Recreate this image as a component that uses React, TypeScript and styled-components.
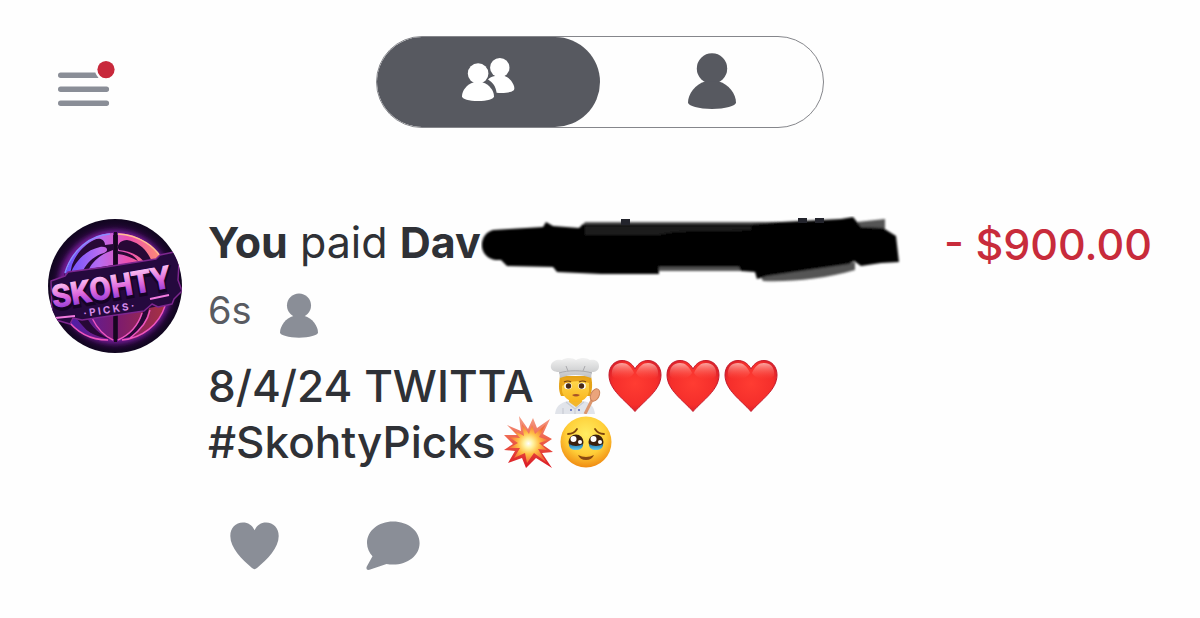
import React from "react";
import styled, { createGlobalStyle } from "styled-components";

const GlobalStyle = createGlobalStyle`
  * { box-sizing: border-box; }
  body {
    margin: 0;
    background: #fefefe;
    color: #2f3136;
    font-family: Inter, "Liberation Sans", sans-serif;
  }
  button {
    margin: 0;
    padding: 0;
    border: 0;
    background: none;
    color: inherit;
    font: inherit;
    cursor: pointer;
  }
  svg { display: block; flex: none; }
`;

const Page = styled.div`
  width: 100%;
  padding: 36px 48px;
`;

const TopBar = styled.header`
  display: grid;
  grid-template-columns: 1fr minmax(0, 448px) 1fr;
`;

const MenuButton = styled.button`
  justify-self: start;
  align-self: start;
  margin: 24px 0 0 10px;
`;

const Toggle = styled.div`
  display: grid;
  grid-template-columns: 1fr 1fr;
  height: 92px;
  border: 1px solid #85868b;
  border-radius: 46px;
  overflow: hidden;
`;

const ToggleOption = styled.button<{ $active?: boolean }>`
  display: flex;
  justify-content: center;
  align-items: flex-start;
  padding-top: ${(p) => (p.$active ? 21 : 16)}px;
  border-radius: 46px;
  background: ${(p) => (p.$active ? "#575960" : "transparent")};
  color: ${(p) => (p.$active ? "#ffffff" : "#575960")};
`;

const Payment = styled.article`
  display: flex;
  align-items: flex-start;
  gap: 26px;
  margin-top: 91px;
`;

const Details = styled.div`
  flex: 1;
  min-width: 0;
`;

const TitleRow = styled.div`
  display: flex;
  justify-content: space-between;
  align-items: flex-start;
`;

const Title = styled.h1`
  margin: 0;
  font-size: 43px;
  font-weight: 400;
  line-height: 46px;
  white-space: nowrap;
`;

const Name = styled.strong`
  position: relative;
  font-weight: 700;
`;

const Redaction = styled.svg`
  position: absolute;
  left: 100%;
  top: 0;
`;

const Amount = styled.span`
  color: #c82b3b;
  font-size: 43px;
  font-weight: 500;
  line-height: 50px;
  white-space: nowrap;
`;

const Meta = styled.div`
  display: flex;
  align-items: flex-end;
  gap: 28px;
  margin-top: 13px;
  color: #8a8e97;
`;

const Age = styled.time`
  color: #595b61;
  font-size: 38px;
  line-height: 56px;
`;

const Note = styled.p`
  margin: 20px 0 0;
  font-size: 44px;
  font-weight: 500;
  line-height: 56px;
`;

const NoteLine = styled.span`
  display: flex;
  align-items: center;
  white-space: nowrap;
`;

const Emojis = styled.span<{ $gap: number }>`
  display: flex;
  align-items: center;
  gap: 4px;
  margin-left: ${(p) => p.$gap}px;
`;

const Actions = styled.div`
  display: flex;
  align-items: center;
  gap: 86px;
  margin: 51px 0 0 22px;
  color: #8a8e97;
`;

const MenuIcon = () => (
  <svg width="58" height="48" viewBox="0 0 58 48" aria-hidden="true">
    <g stroke="#8a8e97" strokeWidth="5.4" strokeLinecap="round">
      <path d="M2.7 15.2H48M2.7 29.2H48.4M2.7 43.2H48.4" />
    </g>
    <circle cx="48" cy="9.6" r="11" fill="#fefefe" />
    <circle cx="48" cy="9.6" r="8.6" fill="#c8283b" />
  </svg>
);

const PersonIcon = ({ width, height }: { width: number; height: number }) => (
  <svg width={width} height={height} viewBox="0 0 48 56" fill="currentColor" aria-hidden="true">
    <circle cx="24" cy="15.4" r="15.2" />
    <path d="M17 28.5C7.500 31 0 41 0 49.500C0 53 11 56 24 56C37 56 48 53 48 49.500C48 41 40.500 31 31 28.500Z" />
  </svg>
);

const PeopleIcon = () => (
  <svg width="54" height="44" viewBox="0 0 54 44" fill="currentColor" aria-hidden="true">
    <circle cx="37.800" cy="9.700" r="9.700" />
    <path d="M33 18C30 18.700 27.500 19.800 26 21.500C31 24.500 34 29 34.600 34.800C42 35.500 49 34.500 51.500 32.500C52.800 31.400 52.500 29 51.500 26.800C49.600 22.500 46.500 19.400 42 17.800Z" />
    <circle cx="16.100" cy="15.500" r="10.300" />
    <path d="M11.500 24.500C5 26.200 0 32.600 0 38.200C0 41 7 43 16 43C25 43 32 41 32 38.200C32 32.600 27 26.200 20.700 24.500Z" />
  </svg>
);

const LikeIcon = () => (
  <svg width="50" height="48" viewBox="0 0 50 48" fill="currentColor" aria-hidden="true">
    <path d="M24.600 8.200C22.200 3 18 .5 13 .5C5.500 .5 .3 6 .3 14C.3 26 11.800 37.300 22 46C23.800 47.500 25.200 47.500 27 46C37.500 37.200 48.700 26 48.700 14C48.700 6 43.500 .5 36 .5C31 .5 27 3 24.600 8.200Z" />
  </svg>
);

const CommentIcon = () => (
  <svg width="54" height="50" viewBox="0 0 54 50" fill="currentColor" aria-hidden="true">
    <path d="M27 .5C12.500 .5 1 9.800 1 22C1 27.200 3.300 31.700 6.500 35.200L.8 45.500C-.2 47.800 1 49.500 3.500 48.800L20.500 43C22.600 43.500 25 43.600 27 43.600C42 43.600 53.600 34.500 53.600 22C53.600 9.800 42 .5 27 .5Z" />
  </svg>
);

const Ink = () => (
  <Redaction width="420" height="68" viewBox="0 0 420 68" aria-hidden="true">
    <defs>
      <filter id="soft" x="-5%" y="-15%" width="110%" height="130%">
        <feGaussianBlur stdDeviation="1" />
      </filter>
    </defs>
    <g filter="url(#soft)">
      <path fill="#555" d="M98 14L104 6H376L404 3V14ZM174 48H280V55H174ZM278 58L374 46V54C344 63 310 66 282 65Z" />
      <path fill="#050505" d="M12 14L62 11L65 6L72 10L98 12L102 8H270L300 6L360 3L372 1L380 11L402 12L415 20L418 46L400 47L380 50L373 45L368 48L286 60L276 63L274 56L260 55L258 51H178V58H120L76 56L72 51L26 50L20 44C-4 46 -4 18 12 14Z" />
      <path fill="#1c1c1c" d="M104 10H270V14C230 17 200 13 178 19H104Z" />
    </g>
    <path fill="#23242c" d="M140 3h9v6h-9zM317 2h9v5h-9zM334 2h9v5h-9z" />
  </Redaction>
);

const Avatar = () => (
  <svg width="134" height="134" viewBox="0 0 134 134" role="img" aria-label="Skohty Picks">
    <defs>
      <clipPath id="disc"><circle cx="67" cy="67" r="67" /></clipPath>
      <radialGradient id="night">
        <stop offset=".6" stopColor="#5a0d6b" />
        <stop offset=".85" stopColor="#210733" />
        <stop offset="1" stopColor="#10051f" />
      </radialGradient>
      <linearGradient id="ball" gradientUnits="userSpaceOnUse" x1="17" y1="40" x2="115" y2="40">
        <stop offset="0" stopColor="#6450ff" />
        <stop offset=".35" stopColor="#b86cf0" />
        <stop offset=".65" stopColor="#ed4fae" />
        <stop offset="1" stopColor="#ff936f" />
      </linearGradient>
      <linearGradient id="lower" x1="0" y1="0" x2="1" y2="0">
        <stop offset="0" stopColor="#4b1fae" />
        <stop offset=".5" stopColor="#7b1a70" />
        <stop offset="1" stopColor="#a63142" />
      </linearGradient>
      <linearGradient id="word" x1="0" y1="0" x2="0" y2="1">
        <stop offset=".2" stopColor="#f9b5ee" />
        <stop offset=".55" stopColor="#dc64dc" />
        <stop offset=".9" stopColor="#8233d6" />
      </linearGradient>
      <filter id="glow" x="-20%" y="-20%" width="140%" height="140%">
        <feGaussianBlur stdDeviation="3" />
      </filter>
    </defs>
    <g clipPath="url(#disc)">
      <rect width="134" height="134" fill="url(#night)" />
      <circle cx="67" cy="68" r="53" fill="none" stroke="#9c25c9" strokeWidth="5" filter="url(#glow)" />
      <circle cx="67" cy="68" r="52" fill="#270836" />
      <path fill="url(#ball)" d="M17 56C24 30 43 15 65 14V25L57 26C57 21 52 18 46 21C37 25 28 35 24 46L22 55ZM22 56C27 42 38 31 52 28C60 27 61 32 56 34C46 37 39 43 35 52ZM65 31V46L41 50C46 40 56 34 65 31ZM70 14C89 15 107 26 115 42L104 43C99 30 90 23 79 21C71 21 68 28 71 31C82 32 91 36 97 44L70 47V35C78 36 84 39 90 42C86 36 80 33 70 32Z" />
      <path fill="none" stroke="#ffbe91" strokeWidth="1.500" d="M70 15C92 16 108 28 115 42" />
      <path fill="none" stroke="#8a8cff" strokeWidth="1.500" d="M17 54C24 31 42 16 62 15" />
      <path fill="url(#lower)" d="M18 98L27 97C34 107 42 116 52 119C36 117 24 109 18 98ZM38 97L65 94V121C52 117 43 107 38 97ZM70 94L96 90C93 103 84 115 70 121ZM101 89L117 86C113 103 98 117 81 121C93 112 99 101 101 89Z" />
      <path fill="none" stroke="#ee55bf" strokeWidth="1.400" d="M18 99C28 113 43 121 60 121M74 121C94 119 111 106 117 87M44 99C49 109 56 117 65 121M70 121C81 116 90 107 94 94M82 119C94 110 100 101 102 91" />
      <path fill="none" stroke="#18061f" strokeWidth="3" d="M67.500 13V123" />
      <path fill="#25093e" stroke="#7d268f" strokeWidth="1.500" strokeLinejoin="round" d="M3 62L17 57L20 53L58 48L108 40L112 36L126 33L131 44L130 61L134 72L126 80L124 85L110 88L104 85L96 92L34 101L25 99L22 105L8 101L4 93Z" />
      <path fill="none" stroke="#f37bdf" strokeWidth="2" d="M7 99L27 97M102 80L121 76" />
      <g transform="rotate(-10 6 90)" fontFamily="Roboto, 'Liberation Sans', sans-serif" fontWeight="700">
        <text x="6" y="91" fontSize="31" fill="#150325" stroke="#150325" strokeWidth="4">SKOHTY</text>
        <text x="6" y="89" fontSize="31" fill="url(#word)" stroke="url(#word)" strokeWidth="1">SKOHTY</text>
      </g>
      <text transform="rotate(-9 36 98)" x="36" y="98" fontFamily="Inter, sans-serif" fontSize="10" fontWeight="700" fill="#d58be9">· P I C K S ·</text>
    </g>
  </svg>
);

const ChefEmoji = () => (
  <svg width="54" height="56" viewBox="0 0 54 56" role="img" aria-label="Cook">
    <defs>
      <linearGradient id="hat" x1="0" y1="0" x2="0" y2="1">
        <stop offset="0" stopColor="#f1f1f1" /><stop offset="1" stopColor="#bfc0c2" />
      </linearGradient>
      <linearGradient id="skin" x1="0" y1="0" x2="0" y2="1">
        <stop offset="0" stopColor="#ffd94f" /><stop offset="1" stopColor="#f9b51c" />
      </linearGradient>
    </defs>
    <path fill="#e5a317" d="M10 18H41C43 27 42 33 40 38L11 38C8 32 9 25 10 18Z" />
    <path fill="#e1e4ea" d="M5 56C6 48 10 45 18 43H33C40 44 44 48 45 56Z" />
    <path fill="#f3b62c" d="M19 39H32V44L26 49L19 44Z" />
    <path fill="url(#skin)" d="M12 22H39V33C38 40 32 44 26 44C19 44 13 39 12 33Z" />
    <path fill="#e9a51b" d="M12 20H39V25C28 22 18 23 12 28Z" />
    <ellipse cx="18" cy="28" rx="3.800" ry="3.300" fill="#fff" /><ellipse cx="32" cy="28" rx="3.800" ry="3.300" fill="#fff" />
    <circle cx="18.500" cy="28" r="2.700" fill="#492a16" /><circle cx="31.500" cy="28" r="2.700" fill="#492a16" />
    <path fill="none" stroke="#744314" strokeWidth="1.200" d="M14 24q4-2 7 0M29 24q4-2 7 0" />
    <path fill="#a65328" d="M22 37Q26 35 30 37Q26 40 22 37Z" />
    <path fill="url(#hat)" d="M10 20L9 14C3 14 0 11 1 7C2 3 7 1 12 2C17-1 23 0 26 2C32-1 37 0 40 2C46 1 49 4 49 8C49 12 46 14 42 14L41 20C31 16 20 16 10 20Z" />
    <path fill="none" stroke="#aaaaad" d="M9 15C18 12 32 12 42 15M18 13l-2-5M33 13l2-5" />
    <path fill="none" stroke="#c9ccd3" strokeWidth="1.200" d="M16 44L25 51L34 44M13 50V56M25 51V56" />
    <path fill="#7985c5" d="M20 51h2v2h-2zM28 51h2v2h-2z" />
    <path stroke="#dc966e" strokeWidth="3" d="M43 40L35 56" />
    <ellipse cx="45" cy="37" rx="4.200" ry="6.500" transform="rotate(26 45 37)" fill="#eba47b" stroke="#c98058" />
  </svg>
);

const HeartEmoji = () => (
  <svg width="54" height="54" viewBox="0 0 54 54" role="img" aria-label="Red heart">
    <defs>
      <radialGradient id="heart" cx=".5" cy=".45" r=".65">
        <stop offset="0" stopColor="#ff3c32" /><stop offset=".65" stopColor="#f52e2b" /><stop offset="1" stopColor="#c91728" />
      </radialGradient>
      <linearGradient id="shine" x1="0" y1="0" x2="0" y2="1">
        <stop offset="0" stopColor="#ffc4bd" stopOpacity=".8" /><stop offset="1" stopColor="#ff5145" stopOpacity="0" />
      </linearGradient>
    </defs>
    <path fill="url(#heart)" stroke="#c51b2c" d="M27 10C24 4 19 1.500 14 1.500C6 1.500 1 8 1 16C1 31 17 41 27 52.500C37 41 53 31 53 16C53 8 48 1.500 40 1.500C35 1.500 30 4 27 10Z" />
    <path fill="url(#shine)" d="M26 14C23 7 19 4 14 4C7 4 3 9 4 17C8 22 21 22 26 14ZM28 14C31 7 35 4 40 4C47 4 51 9 50 17C46 22 33 22 28 14Z" />
  </svg>
);

const BoomEmoji = () => (
  <svg width="54" height="54" viewBox="0 0 54 54" role="img" aria-label="Collision">
    <defs>
      <linearGradient id="boom" x1="0" y1="0" x2="0" y2="1">
        <stop offset="0" stopColor="#f5a18a" /><stop offset=".45" stopColor="#ee604a" /><stop offset="1" stopColor="#da1723" />
      </linearGradient>
      <radialGradient id="blast">
        <stop offset="0" stopColor="#fff" /><stop offset=".25" stopColor="#fff19b" /><stop offset=".55" stopColor="#ffbf46" /><stop offset="1" stopColor="#f26a37" />
      </radialGradient>
    </defs>
    <path fill="url(#boom)" d="M17 1L26 14L31 3L35 13L48 4L41 19L50 24L41 30L51 37L40 38L50 53L34 43L24 53L20 43L6 48L13 36L2 35L11 29L2 20L15 20L5 10L19 16Z" />
    <path fill="url(#blast)" d="M20 9L27 19L30 10L33 19L44 9L37 22L46 25L37 28L45 35L36 34L44 47L32 38L25 48L23 38L12 43L18 33L7 33L16 28L7 22L18 23L11 15L22 21Z" />
  </svg>
);

const TearyEmoji = () => (
  <svg width="52" height="52" viewBox="0 0 52 52" role="img" aria-label="Face holding back tears">
    <defs>
      <radialGradient id="face" cx=".5" cy=".35" r=".65">
        <stop offset="0" stopColor="#ffed62" /><stop offset=".6" stopColor="#ffcf38" /><stop offset="1" stopColor="#f08b12" />
      </radialGradient>
      <linearGradient id="tear" x1="0" y1="0" x2="0" y2="1">
        <stop offset="0" stopColor="#1b75ae" /><stop offset="1" stopColor="#64cbed" />
      </linearGradient>
    </defs>
    <circle cx="26" cy="26" r="25.500" fill="url(#face)" />
    <path fill="none" stroke="#7d430c" strokeWidth="1.800" strokeLinecap="round" d="M8 18Q14 18 17 13M35 13Q38 18 44 18" />
    <path fill="#8a4a12" d="M18 39Q26 43 34 39Q32 44 26 44Q20 44 18 39Z" />
    <circle cx="16" cy="26" r="7.500" fill="#3c210e" /><circle cx="36" cy="26" r="7.500" fill="#3c210e" />
    <path fill="url(#tear)" d="M9 28Q16 32 23 28Q23 34 16 34Q9 34 9 28ZM29 28Q36 32 43 28Q43 34 36 34Q29 34 29 28Z" />
    <g fill="#fff"><circle cx="13.500" cy="23" r="3" /><circle cx="20" cy="26" r="2" /><circle cx="33.500" cy="23" r="3" /><circle cx="40" cy="26" r="2" /></g>
  </svg>
);

export default function App() {
  return (
    <>
      <GlobalStyle />
      <Page>
        <TopBar>
          <MenuButton type="button" aria-label="Menu"><MenuIcon /></MenuButton>
          <Toggle role="group" aria-label="Feed">
            <ToggleOption type="button" $active aria-pressed="true" aria-label="Friends"><PeopleIcon /></ToggleOption>
            <ToggleOption type="button" aria-pressed="false" aria-label="Personal"><PersonIcon width={48} height={56} /></ToggleOption>
          </Toggle>
        </TopBar>
        <main>
          <Payment>
            <Avatar />
            <Details>
              <TitleRow>
                <Title><Name>You</Name> paid <Name>Dav<Ink /></Name></Title>
                <Amount>- $900.00</Amount>
              </TitleRow>
              <Meta><Age>6s</Age><PersonIcon width={38} height={45} /></Meta>
              <Note>
                <NoteLine>
                  8/4/24 TWITTA
                  <Emojis $gap={16}><ChefEmoji /><HeartEmoji /><HeartEmoji /><HeartEmoji /></Emojis>
                </NoteLine>
                <NoteLine>
                  #SkohtyPicks
                  <Emojis $gap={6}><BoomEmoji /><TearyEmoji /></Emojis>
                </NoteLine>
              </Note>
              <Actions>
                <button type="button" aria-label="Like"><LikeIcon /></button>
                <button type="button" aria-label="Comment"><CommentIcon /></button>
              </Actions>
            </Details>
          </Payment>
        </main>
      </Page>
    </>
  );
}
